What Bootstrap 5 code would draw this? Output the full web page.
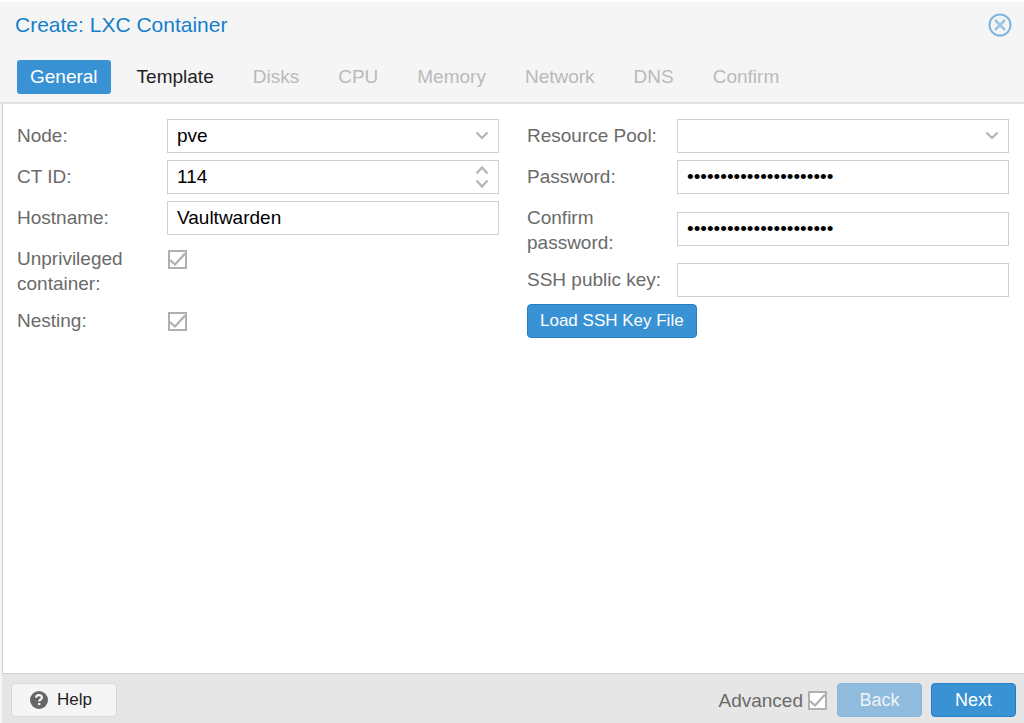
<!DOCTYPE html>
<html lang="en">
<head>
<meta charset="utf-8">
<meta name="viewport" content="width=device-width, initial-scale=1">
<title>Create: LXC Container</title>
<link href="https://cdn.jsdelivr.net/npm/bootstrap@5.3.0/dist/css/bootstrap.min.css" rel="stylesheet">
<style>
  :root { --pve-blue: #3892d4; --pve-line: #cfcfcf; }
  body { font-family: "Liberation Sans", Arial, sans-serif; font-size: 19px; line-height: 25px; color: #6a6a6a; background: #f5f5f5; }
  .wizard { border-top: 2px solid #fff; }
  .wizard-title { font-size: 21px; line-height: 26px; color: #157fcc; }
  .wizard-head { border-bottom: 2px solid #e1e1e1; }
  .title-bar { padding: 10px 12px 0 15px; }
  .close-btn { width: 24px; height: 24px; line-height: 0; }
  .wizard-tabs { --bs-nav-link-padding-x: 13px; --bs-nav-link-padding-y: 4px; --bs-nav-link-color: #222; --bs-nav-link-hover-color: #222; --bs-nav-link-disabled-color: #bababa; --bs-nav-pills-border-radius: 3px; --bs-nav-pills-link-active-bg: var(--pve-blue); gap: 13px; padding: 22px 16px 8px 17px; }
  .wizard-tabs .nav-link { line-height: 26px; }
  .wizard-body { background: #fff; border-left: 1px solid var(--pve-line); margin-left: 2px; padding: 15px 15px 15px 14px; }
  .wizard-body .row { --bs-gutter-x: 28px; --bs-gutter-y: 7px; }
  .stack { display: flex; flex-direction: column; gap: 7px; }
  .field-row { display: flex; min-height: 34px; align-items: center; }
  .field-row > label { width: 150px; flex: none; padding: 4px 12px 1px 0; align-self: flex-start; }
  .field-row > label.wide { padding-right: 0; }
  .field-row > .form-control, .field-row > .form-select { flex: 1; min-width: 0; height: 34px; border: 1px solid var(--pve-line); border-radius: 0; padding: 0 9px; font-size: 19px; line-height: 32px; color: #000; background-color: #fff; }
  .field-row > .form-select { background-image: url("data:image/svg+xml,%3Csvg xmlns='http://www.w3.org/2000/svg' width='14' height='10'%3E%3Cpath d='M1.5 1.5 7 7 12.5 1.5' fill='none' stroke='%23b5b5b5' stroke-width='2.2'/%3E%3C/svg%3E"); background-size: 14px 10px; background-position: right 9px center; }
  .field-row > .spin { appearance: textfield; -moz-appearance: textfield; background: url("data:image/svg+xml,%3Csvg xmlns='http://www.w3.org/2000/svg' width='14' height='24'%3E%3Cpath d='M1.5 8.5 7 2.500l5.500 6M1.500 15.500 7 21.500l5.500-6' fill='none' stroke='%23b5b5b5' stroke-width='2.2'/%3E%3C/svg%3E") no-repeat right 9px center; }
  .spin::-webkit-inner-spin-button { appearance: none; -webkit-appearance: none; margin: 0; }
  .tick { width: 19px; height: 19px; margin: 0 1px; border: 2px solid #b0b0b0; flex: none; }
  .tick[type=checkbox] { border-radius: 0; }
  .tick:checked[type=checkbox] { background: #fff url("data:image/svg+xml,%3Csvg xmlns='http://www.w3.org/2000/svg' viewBox='0 0 15 15'%3E%3Cpath d='M0 8l5 4.500L15 1.500' fill='none' stroke='%23b0b0b0' stroke-width='2.2'/%3E%3C/svg%3E") center/15px 15px no-repeat; border-color: #b0b0b0; }
  .act { --bs-btn-font-size: 17px; --bs-btn-line-height: 24px; --bs-btn-padding-y: 4px; --bs-btn-padding-x: 12px; --bs-btn-border-radius: 4px; }
  .act-blue { --bs-btn-color: #fff; --bs-btn-bg: var(--pve-blue); --bs-btn-border-color: #227fc5; --bs-btn-hover-color: #fff; --bs-btn-hover-bg: #2f86c5; --bs-btn-disabled-color: #eef4f9; --bs-btn-disabled-bg: #90bbdc; --bs-btn-disabled-border-color: #8ab6d9; --bs-btn-disabled-opacity: 1; }
  .act-help { --bs-btn-color: #222; --bs-btn-bg: #f5f5f5; --bs-btn-border-color: #d8d8d8; --bs-btn-hover-bg: #eee; min-width: 106px; padding-left: 18px; gap: 9px; }
  .step { --bs-btn-font-size: 18px; min-width: 85px; }
  .foot-actions { gap: 9px; }
  .wizard-foot { background: #e6e6e6; border-top: 1px solid var(--pve-line); margin-left: 2px; padding: 9px 8px 6px 9px; }
</style>
</head>
<body>
<form class="wizard d-flex flex-column min-vh-100" onsubmit="return false">
  <header class="wizard-head">
    <div class="title-bar d-flex justify-content-between align-items-center">
      <h1 class="wizard-title fw-normal m-0">Create: LXC Container</h1>
      <button type="button" class="close-btn btn border-0 p-0" aria-label="Close">
        <svg width="24" height="24" viewBox="0 0 24 24" fill="none"><circle cx="12" cy="12" r="10.500" stroke="#7fb5de" stroke-width="2"/><path d="M7 7l10 10M17 7L7 17" stroke="#9cc5e5" stroke-width="2.600"/></svg>
      </button>
    </div>
    <nav class="nav nav-pills wizard-tabs" aria-label="Steps">
      <a class="nav-link active" href="#" aria-current="step">General</a>
      <a class="nav-link" href="#">Template</a>
      <a class="nav-link disabled" href="#" aria-disabled="true">Disks</a>
      <a class="nav-link disabled" href="#" aria-disabled="true">CPU</a>
      <a class="nav-link disabled" href="#" aria-disabled="true">Memory</a>
      <a class="nav-link disabled" href="#" aria-disabled="true">Network</a>
      <a class="nav-link disabled" href="#" aria-disabled="true">DNS</a>
      <a class="nav-link disabled" href="#" aria-disabled="true">Confirm</a>
    </nav>
  </header>

  <main class="wizard-body flex-grow-1">
    <div class="row row-cols-1 row-cols-md-2">
      <div class="col"><div class="stack">
        <div class="field-row"><label for="node">Node:</label><select id="node" class="form-select"><option>pve</option></select></div>
        <div class="field-row"><label for="ctid">CT ID:</label><input id="ctid" type="number" class="form-control spin" value="114"></div>
        <div class="field-row"><label for="host">Hostname:</label><input id="host" type="text" class="form-control" value="Vaultwarden"></div>
        <div class="field-row align-items-start"><label for="unpriv">Unprivileged container:</label><input id="unpriv" type="checkbox" class="form-check-input tick mt-2" checked></div>
        <div class="field-row align-items-start"><label for="nesting">Nesting:</label><input id="nesting" type="checkbox" class="form-check-input tick mt-2" checked></div>
      </div></div>
      <div class="col"><div class="stack">
        <div class="field-row"><label class="wide" for="pool">Resource Pool:</label><select id="pool" class="form-select"><option></option></select></div>
        <div class="field-row"><label for="pw">Password:</label><input id="pw" type="password" class="form-control" value="aaaaaaaaaaaaaaaaaaaaaa"></div>
        <div class="field-row"><label for="pw2">Confirm password:</label><input id="pw2" type="password" class="form-control" value="aaaaaaaaaaaaaaaaaaaaaa"></div>
        <div class="field-row"><label class="wide" for="ssh">SSH public key:</label><input id="ssh" type="text" class="form-control"></div>
        <div><button type="button" class="btn act act-blue">Load SSH Key File</button></div>
      </div></div>
    </div>
  </main>

  <footer class="wizard-foot d-flex align-items-center justify-content-between">
    <button type="button" class="btn act act-help d-inline-flex align-items-center">
      <svg width="18" height="18" viewBox="0 0 18 18" fill="none" aria-hidden="true"><circle cx="9" cy="9" r="9" fill="#666"/><path d="M6 6.600C6.300 4.900 7.500 4.200 9 4.200c1.800 0 2.900 1 2.900 2.400 0 1.900-2.700 1.900-2.700 3.900" stroke="#f5f5f5" stroke-width="2.200"/><path d="M8 12h2.400v2.200H8z" fill="#f5f5f5"/></svg>
      <span>Help</span>
    </button>
    <div class="foot-actions d-flex align-items-center">
      <div class="d-flex align-items-center"><label for="adv" class="me-1">Advanced</label><input id="adv" type="checkbox" class="form-check-input tick" checked></div>
      <button type="button" class="btn act act-blue step" disabled>Back</button>
      <button type="submit" class="btn act act-blue step">Next</button>
    </div>
  </footer>
</form>
<script src="https://cdn.jsdelivr.net/npm/bootstrap@5.3.0/dist/js/bootstrap.bundle.min.js"></script>
</body>
</html>
